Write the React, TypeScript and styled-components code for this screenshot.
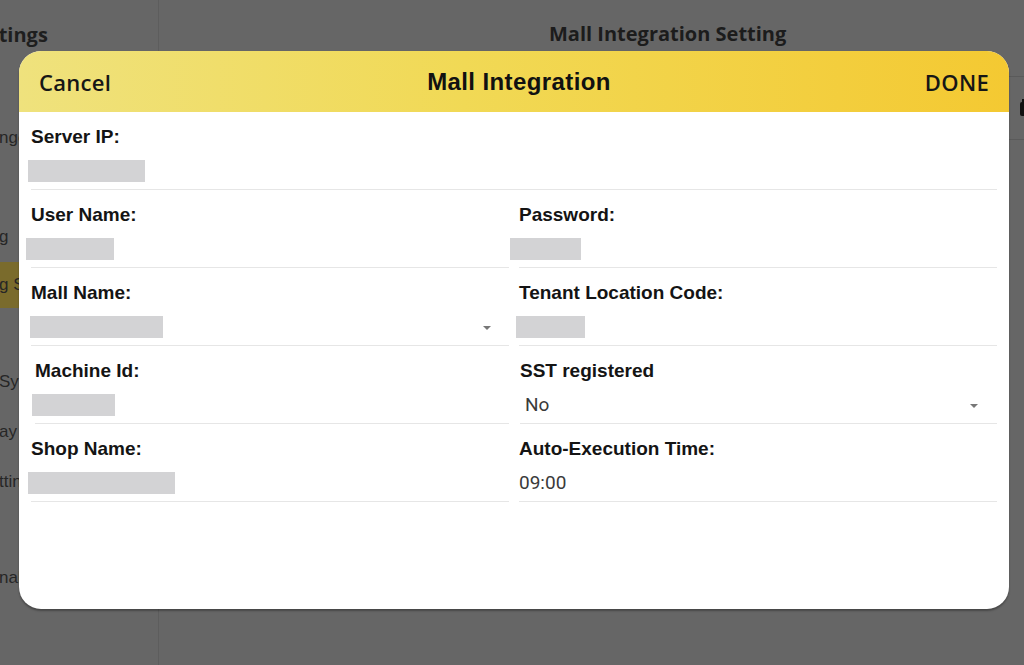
import styled, { createGlobalStyle } from 'styled-components'

const GlobalStyle = createGlobalStyle`
    html, body {
        margin: 0;
        padding: 0;
        background: #666666;
    }
`

type Field = {
    label: string
    box?: number
    text?: string
    select?: boolean
    shift?: number
    wide?: boolean
    inset?: number
}

const fields: Field[] = [
    { label: 'Server IP:', box: 117, shift: -3, wide: true },
    { label: 'User Name:', box: 88, shift: -5 },
    { label: 'Password:', box: 71, shift: -9 },
    { label: 'Mall Name:', box: 133, shift: -1, select: true },
    { label: 'Tenant Location Code:', box: 69, shift: -3 },
    { label: 'Machine Id:', box: 83, shift: -3, inset: 4 },
    { label: 'SST registered', text: 'No', shift: 5, select: true, inset: 1 },
    { label: 'Shop Name:', box: 147, shift: -3 },
    { label: 'Auto-Execution Time:', text: '09:00' },
]

// only the first few pixels of the sidebar show beside the dialog
const sideItems = [
    { text: 'nge', top: 127 },
    { text: 'g', top: 226 },
    { text: 'g S', top: 274, active: true },
    { text: 'Sy', top: 371 },
    { text: 'ay', top: 421 },
    { text: 'ttin', top: 471 },
    { text: 'nal', top: 567 },
]

export default function App() {
    return (
        <>
            <GlobalStyle />
            <Screen>
                <Sidebar>
                    <SideTitle>ttings</SideTitle>
                    {sideItems.map((item) => (
                        <SideItem key={item.text} $top={item.top} $active={item.active}>
                            {item.text}
                        </SideItem>
                    ))}
                </Sidebar>
                <Main>
                    <MainHeader>Mall Integration Setting</MainHeader>
                    <Toolbar>
                        <ToolIcon viewBox="0 0 12 20">
                            <rect x="2" y="4" width="10" height="14" rx="2" fill="#111" />
                            <rect x="4" y="1" width="6" height="3" fill="#111" />
                        </ToolIcon>
                    </Toolbar>
                </Main>

                <Modal>
                    <ModalHeader>
                        <HeaderButton>Cancel</HeaderButton>
                        <Title>Mall Integration</Title>
                        <HeaderButton $right>DONE</HeaderButton>
                    </ModalHeader>
                    <Form>
                        {fields.map((f) => (
                            <FieldBox key={f.label} $wide={f.wide} $inset={f.inset ?? 0}>
                                <Label>{f.label}</Label>
                                <ValueRow>
                                    {f.box ? <Redacted $w={f.box} $shift={f.shift ?? 0} /> : null}
                                    {f.text ? <ValueText $shift={f.shift ?? 0}>{f.text}</ValueText> : null}
                                    {f.select ? <Caret $right={f.text ? 19 : 18} /> : null}
                                </ValueRow>
                            </FieldBox>
                        ))}
                    </Form>
                </Modal>
            </Screen>
        </>
    )
}

const Screen = styled.div`
    position: relative;
    width: 1024px;
    height: 665px;
    overflow: hidden;
    display: flex;
    background: #666666;
    font-family: 'Open Sans', 'Liberation Sans', sans-serif;
`

const Sidebar = styled.div`
    position: relative;
    width: 158px;
    flex-shrink: 0;
    border-right: 1px solid #5d5d5d;
    overflow: hidden;
`

const SideTitle = styled.div`
    margin: 21px 0 0 -10px;
    font-size: 20px;
    font-weight: 700;
    color: #1e1e1e;
`

const SideItem = styled.div<{ $top: number; $active?: boolean }>`
    position: absolute;
    left: 0;
    right: 0;
    top: ${(p) => (p.$active ? p.$top - 12 : p.$top)}px;
    height: ${(p) => (p.$active ? 46 : 22)}px;
    display: flex;
    align-items: center;
    margin-left: -1px;
    background: ${(p) => (p.$active ? '#7a6b2c' : 'transparent')};
    font-family: 'Liberation Sans', sans-serif;
    font-size: 17px;
    color: #262626;
    white-space: nowrap;
`

const Main = styled.div`
    flex: 1;
    display: flex;
    flex-direction: column;
`

const MainHeader = styled.div`
    height: 77px;
    box-sizing: border-box;
    border-bottom: 1px solid #5a5a5a;
    padding: 20px 0 0 390px;
    font-size: 20px;
    font-weight: 700;
    color: #1c1c1c;
`

const Toolbar = styled.div`
    height: 62px;
    border-bottom: 1px solid #5a5a5a;
    display: flex;
    justify-content: flex-end;
    align-items: center;
`

const ToolIcon = styled.svg`
    width: 12px;
    height: 20px;
    margin-right: -6px;
`

const Modal = styled.div`
    position: absolute;
    left: 19px;
    top: 51px;
    width: 990px;
    height: 558px;
    background: #ffffff;
    border-radius: 22px;
    overflow: hidden;
    box-shadow: 0 2px 2px rgba(0, 0, 0, 0.3);
    display: flex;
    flex-direction: column;
`

const ModalHeader = styled.div`
    height: 61px;
    flex-shrink: 0;
    display: grid;
    grid-template-columns: 1fr auto 1fr;
    align-items: center;
    padding: 0 20px;
    background: linear-gradient(90deg, #efe27d 0%, #f1d955 45%, #f4c932 100%);
`

const HeaderButton = styled.div<{ $right?: boolean }>`
    justify-self: ${(p) => (p.$right ? 'end' : 'start')};
    font-size: 22px;
    font-weight: 600;
    letter-spacing: 0.3px;
    color: #161616;
`

const Title = styled.div`
    margin-left: 10px;
    font-family: 'Liberation Sans', sans-serif;
    font-size: 24px;
    font-weight: 700;
    letter-spacing: 0.4px;
    color: #111;
`

const Form = styled.div`
    display: grid;
    grid-template-columns: 1fr 1fr;
    column-gap: 10px;
    padding: 0 12px;
`

const FieldBox = styled.div<{ $wide?: boolean; $inset: number }>`
    grid-column: ${(p) => (p.$wide ? '1 / span 2' : 'auto')};
    height: 78px;
    box-sizing: border-box;
    margin-left: ${(p) => p.$inset}px;
    padding-top: 14px;
    border-bottom: 1px solid #e6e6e6;
    display: flex;
    flex-direction: column;
`

const Label = styled.div`
    height: 22px;
    line-height: 22px;
    font-family: 'Liberation Sans', sans-serif;
    font-size: 19px;
    font-weight: 700;
    color: #141414;
`

const ValueRow = styled.div`
    position: relative;
    flex: 1;
    display: flex;
    align-items: center;
    padding-top: 4px;
`

const Redacted = styled.div<{ $w: number; $shift: number }>`
    width: ${(p) => p.$w}px;
    height: 22px;
    margin-left: ${(p) => p.$shift}px;
    background: #d3d3d5;
`

const ValueText = styled.div<{ $shift: number }>`
    margin-left: ${(p) => p.$shift}px;
    font-family: Roboto, 'Liberation Sans', sans-serif;
    font-size: 19px;
    color: #3a3a3a;
`

const Caret = styled.div<{ $right: number }>`
    position: absolute;
    right: ${(p) => p.$right}px;
    top: 50%;
    margin-top: 1px;
    width: 0;
    height: 0;
    border-left: 4px solid transparent;
    border-right: 4px solid transparent;
    border-top: 4px solid #777;
`
